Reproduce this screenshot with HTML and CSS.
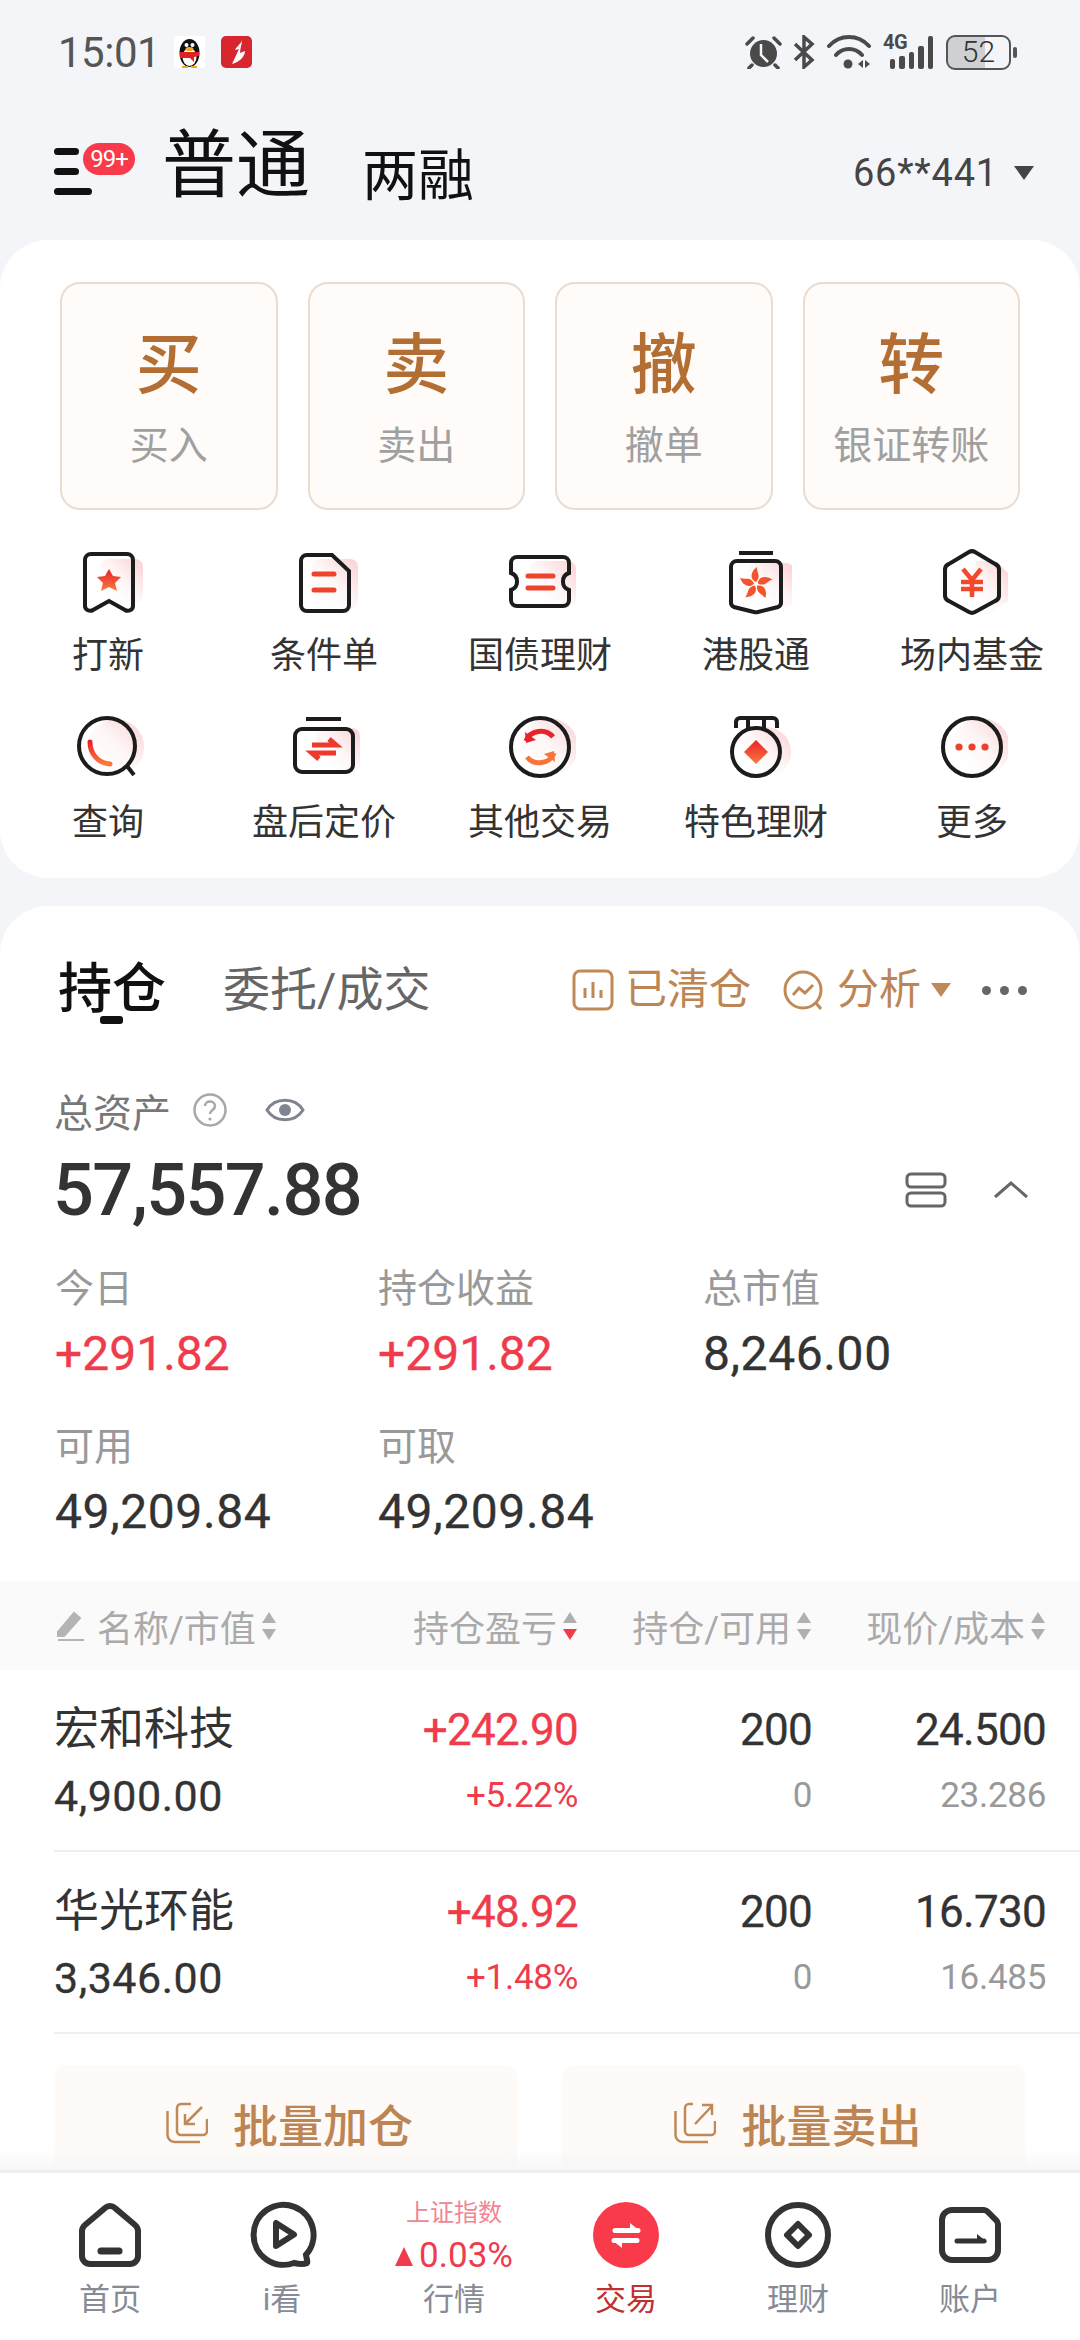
FILE: index.html
```html
<!DOCTYPE html>
<html lang="zh">

<head>
    <meta charset="utf-8">
    <title>交易</title>
    <link rel="stylesheet" href="styles.css">
</head>

<body>
    <svg class="defs">
        <defs>
            <linearGradient id="hot" x1="0" y1="0" x2="0" y2="1">
                <stop offset="0" stop-color="#e9212b" />
                <stop offset="1" stop-color="#fa7a3c" />
            </linearGradient>
            <linearGradient id="fade" x1="1" y1="0" x2="0.2" y2="0.8">
                <stop offset="0" stop-color="#f06a70" stop-opacity="0.32" />
                <stop offset="0.6" stop-color="#f06a70" stop-opacity="0.06" />
                <stop offset="1" stop-color="#f06a70" stop-opacity="0" />
            </linearGradient>
        </defs>
    </svg>

    <main class="content">
        <div class="status">
            <span class="time">15:01</span>
            <svg class="app-icon" viewBox="0 0 31 32">
                <rect width="31" height="32" rx="3" fill="#fff" />
                <ellipse cx="15.5" cy="17" rx="10" ry="14" fill="#111" />
                <ellipse cx="15.5" cy="21" rx="7" ry="9" fill="#fff" />
                <circle cx="12.5" cy="9" r="2" fill="#fff" />
                <circle cx="18.5" cy="9" r="2" fill="#fff" />
                <ellipse cx="15.5" cy="13" rx="4" ry="2" fill="#f3a91f" />
                <path d="M6 16h19v4l-5 1v5l-4-4H6z" fill="#e2201f" />
                <path d="M8 30h6v2H8zM17 30h6v2h-6z" fill="#f3a91f" />
            </svg>
            <svg class="app-icon" viewBox="0 0 31 32">
                <rect width="31" height="32" rx="5" fill="#d8262f" />
                <path d="M21 4c-1 4-5 6-7 10l4-1-7 15c8-2 13-8 13-13l-5 2c0-4 2-9 2-13z" fill="#fff" />
            </svg>
            <div class="status-right">
                <svg class="st-alarm" viewBox="0 0 37 34">
                    <circle cx="18.5" cy="18.5" r="13.5" fill="#4a4a4a" />
                    <path d="M16 9v11l7 7" fill="none" stroke="#f3f5f9" stroke-width="2.5" />
                    <path d="M2 9 8 3M35 9l-6-6M7 30l-3 3M30 30l3 3" stroke="#4a4a4a" stroke-width="3.5" stroke-linecap="round" />
                </svg>
                <svg class="st-bt" viewBox="0 0 23 34">
                    <path d="M3 9 20 25l-8 7V2l8 7L3 25" fill="none" stroke="#4a4a4a" stroke-width="3.5" />
                </svg>
                <svg class="st-wifi" viewBox="0 0 44 34">
                    <path d="M2 11C13-1 31-1 42 11M9 20c7-8 19-8 26 0" fill="none" stroke="#4a4a4a" stroke-width="4" stroke-linecap="round" />
                    <circle cx="21" cy="29" r="4.5" fill="#4a4a4a" />
                    <path d="M36 25v8l-5-4zM38 25v8l5-4z" fill="#4a4a4a" />
                </svg>
                <div class="st-signal">
                    <span class="st-4g">4G</span>
                    <i class="bar b1"></i><i class="bar b2"></i><i class="bar b3"></i><i class="bar b4"></i><i class="bar b5"></i>
                </div>
                <div class="battery"><span class="battery-level">52</span></div>
                <i class="battery-nub"></i>
            </div>
        </div>

        <header class="header">
            <div class="menu">
                <i class="menu-line"></i><i class="menu-line"></i><i class="menu-line long"></i>
                <span class="badge">99+</span>
            </div>
            <span class="title">普通</span>
            <span class="title-sub">两融</span>
            <div class="account">66**441<i class="tri-down"></i></div>
        </header>

        <section class="card trade-card">
            <div class="actions">
                <div class="action"><span class="action-big">买</span><span class="action-sub">买入</span></div>
                <div class="action"><span class="action-big">卖</span><span class="action-sub">卖出</span></div>
                <div class="action"><span class="action-big">撤</span><span class="action-sub">撤单</span></div>
                <div class="action"><span class="action-big">转</span><span class="action-sub">银证转账</span></div>
            </div>
            <div class="shortcuts">
                <div class="shortcut">
                    <svg class="sc-icon" viewBox="0 0 72 72">
                        <rect x="28" y="12" width="43" height="44" rx="8" fill="url(#fade)" />
                        <path class="ink" d="M19 7h36a6 6 0 0 1 6 6v46c0 4-5 6-8 4l-16-9-16 9c-3 2-8 0-8-4V13a6 6 0 0 1 6-6z" />
                        <path d="m37 22 4 7 8 1-6 6 2 8-8-4-8 4 2-8-6-6 8-1z" fill="url(#hot)" />
                    </svg>
                    <span class="sc-label">打新</span>
                </div>
                <div class="shortcut">
                    <svg class="sc-icon" viewBox="0 0 72 72">
                        <rect x="24" y="12" width="46" height="50" rx="8" fill="url(#fade)" />
                        <path class="ink" d="M19 8h25l17 16v34a6 6 0 0 1-6 6H19a6 6 0 0 1-6-6V14a6 6 0 0 1 6-6z" />
                        <path class="hot-line" d="M26 27h20M26 43h20" />
                    </svg>
                    <span class="sc-label">条件单</span>
                </div>
                <div class="shortcut">
                    <svg class="sc-icon" viewBox="0 0 72 72">
                        <rect x="26" y="14" width="46" height="46" rx="8" fill="url(#fade)" />
                        <path class="ink" d="M13 10h46a6 6 0 0 1 6 6v10a9 9 0 0 0 0 17v10a6 6 0 0 1-6 6H13a6 6 0 0 1-6-6V43a9 9 0 0 0 0-17V16a6 6 0 0 1 6-6z" />
                        <path class="hot-line" d="M24 29h25M24 41h25" />
                    </svg>
                    <span class="sc-label">国债理财</span>
                </div>
                <div class="shortcut">
                    <svg class="sc-icon" viewBox="0 0 72 72">
                        <rect x="28" y="16" width="46" height="44" rx="8" fill="url(#fade)" />
                        <path class="ink" d="M19 6h34" />
                        <path class="ink" d="M17 14h38a6 6 0 0 1 6 6v36c0 2-1 3-3 4l-20 5a8 8 0 0 1-4 0l-20-5c-2-1-3-2-3-4V20a6 6 0 0 1 6-6z" />
                        <g transform="translate(36 37)" fill="#f2552c">
                            <path d="M0-2C-7-5-5-13 1-17 0-12 6-8 0-2z" />
                            <path d="M0-2C-7-5-5-13 1-17 0-12 6-8 0-2z" transform="rotate(72)" />
                            <path d="M0-2C-7-5-5-13 1-17 0-12 6-8 0-2z" transform="rotate(144)" />
                            <path d="M0-2C-7-5-5-13 1-17 0-12 6-8 0-2z" transform="rotate(216)" />
                            <path d="M0-2C-7-5-5-13 1-17 0-12 6-8 0-2z" transform="rotate(288)" />
                        </g>
                    </svg>
                    <span class="sc-label">港股通</span>
                </div>
                <div class="shortcut">
                    <svg class="sc-icon" viewBox="0 0 72 72">
                        <path d="M40 14h20l12 12v28L50 68H30z" fill="url(#fade)" />
                        <path class="ink" d="M33 5a6 6 0 0 1 6 0l20 12a6 6 0 0 1 4 5v27a6 6 0 0 1-4 5L39 65a6 6 0 0 1-6 0L13 54a6 6 0 0 1-4-5V22a6 6 0 0 1 4-5z" />
                        <path d="M27 22l9 11 9-11M25 35h22M25 42h22M36 33v17" fill="none" stroke="#f2482c" stroke-width="4.5" />
                    </svg>
                    <span class="sc-label">场内基金</span>
                </div>
                <div class="shortcut">
                    <svg class="sc-icon" viewBox="0 0 72 72">
                        <circle cx="44" cy="33" r="28" fill="url(#fade)" />
                        <circle class="ink" cx="35" cy="32" r="28" />
                        <path class="ink" d="m55 52 7 9" />
                        <path d="M18 28c0 12 8 21 20 22" fill="none" stroke="url(#hot)" stroke-width="5" stroke-linecap="round" />
                    </svg>
                    <span class="sc-label">查询</span>
                </div>
                <div class="shortcut">
                    <svg class="sc-icon" viewBox="0 0 72 72">
                        <rect x="28" y="14" width="44" height="44" rx="8" fill="url(#fade)" />
                        <path class="ink" d="M18 5h35" />
                        <rect class="ink" x="7" y="15" width="58" height="43" rx="7" />
                        <path class="hot-arrows" d="M24 31h24l-7-6M48 39H24l7 6" />
                    </svg>
                    <span class="sc-label">盘后定价</span>
                </div>
                <div class="shortcut">
                    <svg class="sc-icon" viewBox="0 0 72 72">
                        <circle cx="45" cy="33" r="29" fill="url(#fade)" />
                        <circle class="ink" cx="36" cy="33" r="29" />
                        <path d="M22 27c4-11 20-13 27-4" fill="none" stroke="#e8232c" stroke-width="5" />
                        <path d="m21 18 1 11 10-3z" fill="#e8232c" />
                        <path d="M50 39c-4 11-20 13-27 4" fill="none" stroke="#f8743a" stroke-width="5" />
                        <path d="m51 48-1-11-10 3z" fill="#f8743a" />
                    </svg>
                    <span class="sc-label">其他交易</span>
                </div>
                <div class="shortcut">
                    <svg class="sc-icon" viewBox="0 0 72 72">
                        <circle cx="46" cy="38" r="25" fill="url(#fade)" />
                        <path class="ink" d="M16 14V8a4 4 0 0 1 4-4h33a4 4 0 0 1 4 4v6M28 5v9M44 5v9" />
                        <circle class="ink" cx="36" cy="38" r="24" />
                        <path d="m36 26 12 12-12 12-12-12z" fill="url(#hot)" />
                    </svg>
                    <span class="sc-label">特色理财</span>
                </div>
                <div class="shortcut">
                    <svg class="sc-icon" viewBox="0 0 72 72">
                        <circle cx="45" cy="33" r="29" fill="url(#fade)" />
                        <circle class="ink" cx="36" cy="33" r="29" />
                        <circle cx="23" cy="33" r="3.6" fill="#ee3f2c" />
                        <circle cx="36" cy="33" r="3.6" fill="#ee3f2c" />
                        <circle cx="49" cy="33" r="3.6" fill="#ee3f2c" />
                    </svg>
                    <span class="sc-label">更多</span>
                </div>
            </div>
        </section>

        <section class="card holdings">
            <div class="tabs">
                <div class="tab-active">持仓<i class="tab-mark"></i></div>
                <div class="tab-other">委托/成交</div>
                <div class="tab-tools">
                    <svg class="tool-icon" viewBox="0 0 42 42">
                        <rect class="bronze" x="2" y="2" width="38" height="38" rx="6" />
                        <path class="bronze" d="M13 19v10M21 13v16M29 21v8" />
                    </svg>
                    <span class="tool-text">已清仓</span>
                    <svg class="tool-icon second" viewBox="0 0 44 42">
                        <circle class="bronze" cx="21" cy="21" r="18" />
                        <path class="bronze" d="m34 34 5 6M11 26l6-7 6 5 8-8" />
                    </svg>
                    <span class="tool-text">分析</span>
                    <i class="tri-bronze"></i>
                    <div class="more-dots"><i></i><i></i><i></i></div>
                </div>
            </div>

            <div class="asset-label">
                <span>总资产</span>
                <svg class="help" viewBox="0 0 36 38">
                    <circle cx="18" cy="19" r="15.5" fill="none" stroke="#a8a8a8" stroke-width="2.5" />
                    <path d="M13 15c0-6 10-6 10 0 0 4-5 4-5 8" fill="none" stroke="#a8a8a8" stroke-width="2.5" />
                    <circle cx="18" cy="28" r="1.6" fill="#a8a8a8" />
                </svg>
                <svg class="eye" viewBox="0 0 40 28">
                    <path d="M2 14C10 1 30 1 38 14 30 27 10 27 2 14z" fill="none" stroke="#7f8590" stroke-width="3" />
                    <circle cx="20" cy="14" r="6" fill="#7f8590" />
                </svg>
            </div>
            <div class="asset-total">
                <span>57,557.88</span>
                <svg class="layout-icon" viewBox="0 0 42 36">
                    <rect x="2" y="2" width="38" height="13" rx="4" fill="none" stroke="#666" stroke-width="3" />
                    <rect x="2" y="21" width="38" height="13" rx="4" fill="none" stroke="#666" stroke-width="3" />
                </svg>
                <svg class="chevron" viewBox="0 0 36 18">
                    <path d="M2 16 18 2l16 14" fill="none" stroke="#666" stroke-width="3" />
                </svg>
            </div>

            <div class="stats">
                <div class="stat"><span class="stat-label">今日</span><span class="stat-value up">+291.82</span></div>
                <div class="stat"><span class="stat-label">持仓收益</span><span class="stat-value up">+291.82</span></div>
                <div class="stat"><span class="stat-label">总市值</span><span class="stat-value">8,246.00</span></div>
                <div class="stat"><span class="stat-label">可用</span><span class="stat-value">49,209.84</span></div>
                <div class="stat"><span class="stat-label">可取</span><span class="stat-value">49,209.84</span></div>
            </div>

            <div class="table-head">
                <div class="th th-name">
                    <svg class="pen" viewBox="0 0 30 32">
                        <path d="M2 22 18 3l6 5L8 26H2zM2 30h26" fill="#b4b4b4" stroke="#b4b4b4" stroke-width="2" />
                    </svg>
                    名称/市值
                    <svg class="sort" viewBox="0 0 16 30"><path d="m8 1 7 11H1z" fill="#b0b0b0" /><path d="m8 29 7-11H1z" fill="#b0b0b0" /></svg>
                </div>
                <div class="th">持仓盈亏
                    <svg class="sort" viewBox="0 0 16 30"><path d="m8 1 7 11H1z" fill="#b0b0b0" /><path d="m8 29 7-11H1z" fill="#ef3b4b" /></svg>
                </div>
                <div class="th">持仓/可用
                    <svg class="sort" viewBox="0 0 16 30"><path d="m8 1 7 11H1z" fill="#b0b0b0" /><path d="m8 29 7-11H1z" fill="#b0b0b0" /></svg>
                </div>
                <div class="th">现价/成本
                    <svg class="sort" viewBox="0 0 16 30"><path d="m8 1 7 11H1z" fill="#b0b0b0" /><path d="m8 29 7-11H1z" fill="#b0b0b0" /></svg>
                </div>
            </div>

            <div class="row">
                <div class="cell-name"><span class="name">宏和科技</span><span class="second-dark">4,900.00</span></div>
                <div class="cell"><span class="main up">+242.90</span><span class="second up">+5.22%</span></div>
                <div class="cell"><span class="main">200</span><span class="second">0</span></div>
                <div class="cell"><span class="main">24.500</span><span class="second">23.286</span></div>
            </div>
            <div class="row">
                <div class="cell-name"><span class="name">华光环能</span><span class="second-dark">3,346.00</span></div>
                <div class="cell"><span class="main up">+48.92</span><span class="second up">+1.48%</span></div>
                <div class="cell"><span class="main">200</span><span class="second">0</span></div>
                <div class="cell"><span class="main">16.730</span><span class="second">16.485</span></div>
            </div>

            <div class="batch">
                <div class="batch-btn">
                    <svg class="batch-icon" viewBox="0 0 42 42">
                        <path class="bronze thin" d="M25 2H15a4 4 0 0 0-4 4v23a4 4 0 0 0 4 4h22a4 4 0 0 0 4-4V17M1.500 9v24a7 7 0 0 0 7 7H34" />
                        <path class="bronze thin" d="M36 5 19 22M19 12v10h10" />
                    </svg>
                    批量加仓
                </div>
                <div class="batch-btn">
                    <svg class="batch-icon" viewBox="0 0 42 42">
                        <path class="bronze thin" d="M19 2h-4a4 4 0 0 0-4 4v23a4 4 0 0 0 4 4h22a4 4 0 0 0 4-4V19M1.500 9v24a7 7 0 0 0 7 7H34" />
                        <path class="bronze thin" d="M21 22 38 4M28 3h10v10" />
                    </svg>
                    批量卖出
                </div>
            </div>
        </section>
    </main>

    <nav class="tabbar">
        <div class="nav-item">
            <svg class="nav-icon" viewBox="0 0 72 72">
                <path class="nav-ink" d="M31 9a7 7 0 0 1 10 0l20 17a8 8 0 0 1 3 6v25a8 8 0 0 1-8 8H16a8 8 0 0 1-8-8V32a8 8 0 0 1 3-6z" />
                <path d="M27 52h18" stroke="#333" stroke-width="7" stroke-linecap="round" />
            </svg>
            <span class="nav-label">首页</span>
        </div>
        <div class="nav-item">
            <svg class="nav-icon" viewBox="0 0 72 72">
                <path class="nav-ink" d="M60 55.800A30 30 0 1 0 48 64c4 1 9 2 13 0 1-1 0-2-1-8.200z" />
                <path class="nav-ink round" d="M30 24v23l18-11.500z" />
            </svg>
            <span class="nav-label">i看</span>
        </div>
        <div class="nav-item">
            <div class="quote">
                <span class="quote-name">上证指数</span>
                <span class="quote-value"><i class="tri-up"></i>0.03%</span>
            </div>
            <span class="nav-label">行情</span>
        </div>
        <div class="nav-item">
            <svg class="nav-icon" viewBox="0 0 72 72">
                <circle cx="36" cy="36" r="33" fill="#f83a4a" />
                <path d="M25 31.500h23M47 41.500H24" stroke="#fff" stroke-width="5" stroke-linecap="round" />
                <path d="M40 24l10 8H40zM32 49l-10-8h10z" fill="#fff" />
            </svg>
            <span class="nav-label on">交易</span>
        </div>
        <div class="nav-item">
            <svg class="nav-icon" viewBox="0 0 72 72">
                <circle class="nav-ink" cx="36" cy="36" r="30" />
                <path class="nav-ink round" d="m36 25 11 11-11 11-11-11z" />
            </svg>
            <span class="nav-label">理财</span>
        </div>
        <div class="nav-item">
            <svg class="nav-icon" viewBox="0 0 72 72">
                <path class="nav-ink" d="M18 11h32a6 6 0 0 1 4 2l8 8a6 6 0 0 1 2 4v26a10 10 0 0 1-10 10H18A10 10 0 0 1 8 51V21a10 10 0 0 1 10-10z" />
                <path d="M23 42h27" stroke="#333" stroke-width="5" stroke-linecap="round" />
                <path d="M43 43v-8l10 8z" fill="#333" />
            </svg>
            <span class="nav-label">账户</span>
        </div>
    </nav>
</body>

</html>
```

FILE: styles.css
```css
* {
    box-sizing: border-box;
}

html,
body {
    margin: 0;
    padding: 0;
}

body {
    width: 1080px;
    height: 2340px;
    display: flex;
    flex-direction: column;
    overflow: hidden;
    background-color: #f3f5f9;
    color: #333;
    font-family: Roboto, "Noto Sans CJK SC", sans-serif;
}

i {
    display: block;
}

.defs {
    display: block;
    width: 0;
    height: 0;
}

.content {
    height: 2170px;
    overflow: hidden;
}

/* status bar */
.status {
    height: 104px;
    display: flex;
    align-items: center;
    padding: 0 63px 0 58px;
}

.time {
    font-size: 42px;
    color: #555;
    letter-spacing: -0.5px;
    margin-right: 14px;
}

.app-icon {
    width: 31px;
    height: 32px;
    margin-right: 16px;
}

.status-right {
    margin-left: auto;
    display: flex;
    align-items: center;
}

.st-alarm {
    width: 37px;
    height: 34px;
    margin-right: 10px;
}

.st-bt {
    width: 23px;
    height: 34px;
    margin-right: 12px;
}

.st-wifi {
    width: 44px;
    height: 34px;
    margin-right: 12px;
}

.st-signal {
    position: relative;
    width: 50px;
    height: 34px;
    display: flex;
    align-items: flex-end;
    justify-content: flex-end;
    gap: 4px;
    margin-right: 13px;
}

.st-4g {
    position: absolute;
    top: -1px;
    left: 0;
    font-size: 20px;
    line-height: 17px;
    font-weight: 700;
    letter-spacing: -0.5px;
    color: #4a4a4a;
}

.bar {
    width: 5.400px;
    background: #4a4a4a;
    border-radius: 2px;
}

.b1 {
    height: 10px;
}

.b2 {
    height: 13px;
}

.b3 {
    height: 17px;
}

.b4 {
    height: 23px;
}

.b5 {
    height: 33px;
}

.battery {
    width: 65px;
    height: 35px;
    border: 2.500px solid #555;
    border-radius: 9px;
    background: linear-gradient(to right, #cfd0d3 60%, transparent 60%);
    display: flex;
    align-items: center;
    justify-content: center;
}

.battery-level {
    font-size: 30px;
    line-height: 30px;
    font-weight: 300;
    color: #333;
}

.battery-nub {
    width: 4px;
    height: 11px;
    margin-left: 2px;
    background: #555;
    border-radius: 2px;
}

/* account header */
.header {
    height: 136px;
    display: flex;
    align-items: flex-start;
    padding: 0 46px 0 54px;
}

.menu {
    position: relative;
    width: 108px;
    height: 48px;
    display: flex;
    flex-direction: column;
    gap: 13px;
    margin-top: 44px;
}

.menu-line {
    width: 25px;
    height: 7px;
    background: #111;
    border-radius: 4px;
}

.menu-line.long {
    width: 38px;
}

.badge {
    position: absolute;
    top: -5px;
    left: 29px;
    width: 52px;
    height: 32px;
    background: #f83a4a;
    border-radius: 16px;
    color: #fff;
    font-size: 24px;
    letter-spacing: -1px;
    line-height: 32px;
    text-align: center;
}

.title {
    font-size: 74px;
    line-height: 124px;
    color: #111;
}

.title-sub {
    font-size: 56px;
    line-height: 104px;
    padding-top: 20px;
    color: #111;
    margin-left: 52px;
}

.account {
    margin-left: auto;
    margin-top: 20px;
    height: 98px;
    display: flex;
    align-items: center;
    font-size: 38px;
    letter-spacing: 0.800px;
    color: #444;
}

.tri-down {
    width: 0;
    height: 0;
    margin-left: 16px;
    border-left: 10px solid transparent;
    border-right: 10px solid transparent;
    border-top: 14px solid #444;
}

/* cards */
.card {
    background: #fff;
    border-radius: 48px 48px 0 0;
}

.trade-card {
    border-radius: 48px;
    padding: 42px 0 33px;
}

.actions {
    display: grid;
    grid-template-columns: repeat(4, 1fr);
    gap: 30px;
    padding: 0 60px;
}

.action {
    height: 228px;
    background: #fefbf8;
    border: 2px solid #eadccf;
    border-radius: 20px;
    display: flex;
    flex-direction: column;
    align-items: center;
    padding-top: 44px;
}

.action-big {
    font-size: 66px;
    line-height: 76px;
    font-weight: 500;
    color: #b36f33;
}

.action-sub {
    font-size: 39px;
    line-height: 50px;
    margin-top: 17px;
    color: #a0a0a0;
}

.shortcuts {
    display: grid;
    grid-template-columns: repeat(5, 216px);
    row-gap: 36px;
    margin-top: 37px;
}

.shortcut {
    display: flex;
    flex-direction: column;
    align-items: center;
}

.sc-icon {
    width: 72px;
    height: 72px;
}

.ink {
    fill: none;
    stroke: #1c1c1c;
    stroke-width: 4;
}

.hot-line {
    fill: none;
    stroke: #f0432c;
    stroke-width: 5;
    stroke-linecap: round;
}

.hot-arrows {
    fill: none;
    stroke: #ee3a2c;
    stroke-width: 5;
}

.sc-label {
    font-size: 36px;
    line-height: 44px;
    margin-top: 15px;
}

/* holdings */
.holdings {
    margin-top: 28px;
    padding-top: 49px;
}

.tabs {
    height: 70px;
    display: flex;
    align-items: center;
    padding: 0 53px 0 58px;
    line-height: 60px;
}

.tab-active {
    position: relative;
    font-size: 54px;
    line-height: 70px;
    font-weight: 500;
    color: #111;
}

.tab-mark {
    position: absolute;
    left: 42px;
    bottom: 1px;
    width: 23px;
    height: 8px;
    background: #111;
    border-radius: 3px;
}

.tab-other {
    font-size: 47px;
    color: #666;
    margin-left: 57px;
}

.tab-tools {
    margin-left: auto;
    display: flex;
    align-items: center;
}

.tool-icon {
    width: 42px;
    height: 42px;
    margin-right: 11px;
}

.tool-icon.second {
    width: 44px;
    margin-left: 31px;
}

.bronze {
    fill: none;
    stroke: #c08a58;
    stroke-width: 3;
}

.bronze.thin {
    stroke-width: 2.500;
}

.tool-text {
    font-size: 42px;
    color: #bd8553;
}

.tri-bronze {
    width: 0;
    height: 0;
    margin-left: 10px;
    border-left: 10px solid transparent;
    border-right: 10px solid transparent;
    border-top: 14px solid #c08a58;
}

.more-dots {
    display: flex;
    gap: 9px;
    margin-left: 31px;
}

.more-dots i {
    width: 9px;
    height: 9px;
    border-radius: 50%;
    background: #666;
}

.asset-label {
    height: 50px;
    margin-top: 60px;
    padding-left: 54px;
    display: flex;
    align-items: center;
    font-size: 39px;
    color: #777;
}

.help {
    width: 36px;
    height: 38px;
    margin-left: 21px;
}

.eye {
    width: 40px;
    height: 28px;
    margin-left: 37px;
}

.asset-total {
    height: 90px;
    margin-top: 10px;
    padding: 0 51px 0 53px;
    display: flex;
    align-items: center;
    font-size: 72px;
    font-weight: 500;
    letter-spacing: -1.600px;
    color: #333;
}

.layout-icon {
    width: 42px;
    height: 36px;
    margin-left: auto;
}

.chevron {
    width: 36px;
    height: 18px;
    margin-left: 46px;
}

.stats {
    display: grid;
    grid-template-columns: 323px 325px 1fr;
    row-gap: 39px;
    margin: 30px 0 39px;
    padding-left: 55px;
}

.stat {
    display: flex;
    flex-direction: column;
    gap: 11px;
}

.stat-label {
    font-size: 39px;
    line-height: 48px;
    color: #999;
}

.stat-value {
    font-size: 48px;
    line-height: 60px;
    letter-spacing: 0.600px;
    -webkit-text-stroke: 0.3px currentColor;
    color: #333;
}

.stat-value.up {
    letter-spacing: 0;
    color: #ef3b4b;
}

.up {
    color: #ef3b4b;
}

.table-head {
    height: 89px;
    display: grid;
    grid-template-columns: 290px 234px 234px 234px;
    padding: 0 33px 0 54px;
    background: #fafafa;
}

.th {
    display: flex;
    align-items: center;
    justify-content: flex-end;
    font-size: 36px;
    color: #aaa;
}

.th-name {
    justify-content: flex-start;
}

.pen {
    width: 30px;
    height: 32px;
    margin: 0 11px 0 2px;
}

.sort {
    width: 16px;
    height: 30px;
    margin-left: 5px;
}

.row {
    height: 182px;
    margin-left: 54px;
    padding: 34px 33px 0 0;
    display: grid;
    grid-template-columns: 290px 234px 234px 234px;
    border-bottom: 2px solid #eee;
}

.cell-name,
.cell {
    display: flex;
    flex-direction: column;
    gap: 15px;
}

.cell {
    align-items: flex-end;
}

.name {
    font-size: 45px;
    line-height: 52px;
}

.main {
    font-size: 44px;
    line-height: 52px;
    letter-spacing: -0.700px;
    -webkit-text-stroke: 0.3px currentColor;
}

.second {
    font-size: 35px;
    line-height: 50px;
    letter-spacing: -0.300px;
    color: #999;
}

.second.up {
    color: #ef3b4b;
}

.second-dark {
    font-size: 43px;
    line-height: 50px;
    letter-spacing: 0.500px;
    -webkit-text-stroke: 0.3px currentColor;
}

.batch {
    margin-top: 31px;
    padding: 0 54px;
    display: grid;
    grid-template-columns: 463px 464px;
    column-gap: 45px;
}

.batch-btn {
    height: 116px;
    padding-left: 8px;
    background: #fdfaf7;
    border-radius: 12px;
    display: flex;
    align-items: center;
    justify-content: center;
    font-size: 45px;
    font-weight: 500;
    color: #bd8553;
}

.batch-icon {
    width: 42px;
    height: 42px;
    margin-right: 25px;
}

/* bottom navigation */
.tabbar {
    position: relative;
    height: 170px;
    padding: 26px 24px 0;
    display: grid;
    grid-template-columns: repeat(6, 172px);
    background: #fff;
    border-top: 3px solid #eee;
}

.tabbar::before {
    content: "";
    position: absolute;
    left: 0;
    right: 0;
    top: -25px;
    height: 22px;
    background: linear-gradient(to bottom, rgba(246, 246, 246, 0), rgba(246, 246, 246, 0.9));
}

.nav-item {
    display: flex;
    flex-direction: column;
    align-items: center;
}

.nav-icon {
    width: 72px;
    height: 72px;
}

.nav-ink {
    fill: none;
    stroke: #333;
    stroke-width: 6;
}

.nav-ink.round {
    stroke-linejoin: round;
}

.nav-label {
    font-size: 31px;
    line-height: 36px;
    margin-top: 11px;
    color: #868b95;
}

.nav-label.on {
    color: #c0302f;
}

.quote {
    height: 72px;
    display: flex;
    flex-direction: column;
    align-items: center;
}

.quote-name {
    font-size: 24px;
    line-height: 28px;
    color: #f18593;
}

.quote-value {
    display: flex;
    align-items: center;
    gap: 6px;
    font-size: 35px;
    line-height: 58px;
    color: #ef3b4b;
}

.tri-up {
    width: 0;
    height: 0;
    border-left: 9.500px solid transparent;
    border-right: 9.500px solid transparent;
    border-bottom: 19px solid #ef3b4b;
}
```
